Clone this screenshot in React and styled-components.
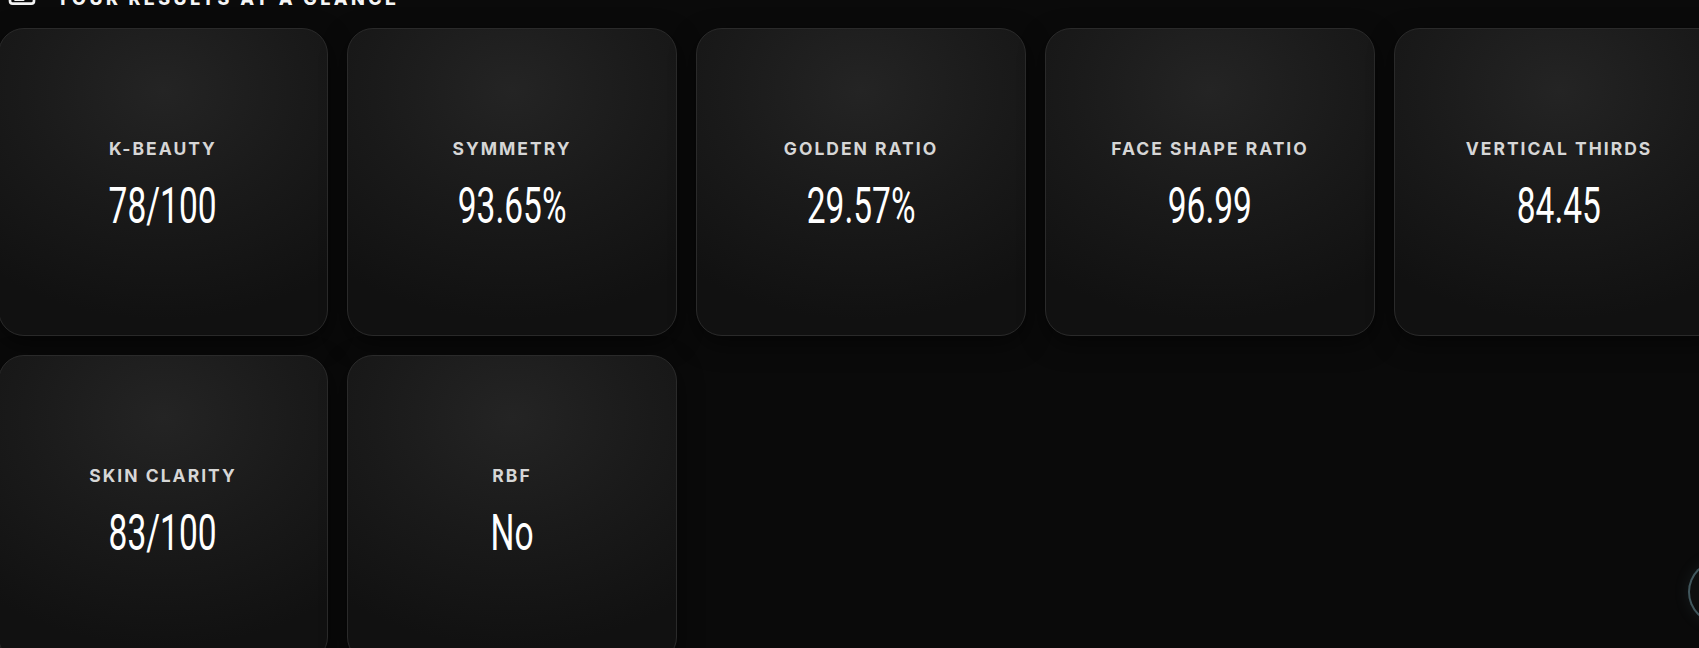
import React from "react";
import styled, { createGlobalStyle } from "styled-components";

const metrics = [
  { label: "K-BEAUTY", value: "78/100" },
  { label: "SYMMETRY", value: "93.65%" },
  { label: "GOLDEN RATIO", value: "29.57%" },
  { label: "FACE SHAPE RATIO", value: "96.99" },
  { label: "VERTICAL THIRDS", value: "84.45" },
  { label: "SKIN CLARITY", value: "83/100" },
  { label: "RBF", value: "No" },
];

const App = () => {
  return (
    <>
      <GlobalStyle />
      <Page>
        <Header>
          <HeaderIcon viewBox="0 0 24 24">
            <rect x="3" y="4" width="18" height="16" rx="2" />
            <path d="M7 9h10M7 13h10M7 17h6" />
          </HeaderIcon>
          <Title>YOUR RESULTS AT A GLANCE</Title>
        </Header>
        <Grid>
          {metrics.map((m) => (
            <Card key={m.label}>
              <Label>{m.label}</Label>
              <Value>
                <span>{m.value}</span>
              </Value>
            </Card>
          ))}
        </Grid>
      </Page>
      <FloatButton />
    </>
  );
};

export default App;

const GlobalStyle = createGlobalStyle`
  html, body {
    margin: 0;
    padding: 0;
    background: #0a0a0a;
    overflow: hidden;
    height: 100%;
  }
  body {
    font-family: "Inter", "Noto Sans", sans-serif;
    color: #fff;
  }
`;

const Page = styled.div`
  margin-top: -13px;
  margin-left: -2px;
  width: 1760px;
`;

const Header = styled.div`
  display: flex;
  align-items: center;
  gap: 18px;
  height: 24px;
  padding-left: 8px;
  margin-bottom: 17px;
`;

const HeaderIcon = styled.svg`
  width: 32px;
  height: 32px;
  fill: none;
  stroke: #f2f2f2;
  stroke-width: 2;
  stroke-linecap: round;
  stroke-linejoin: round;
  margin-top: -12px;
`;

const Title = styled.div`
  font-family: "Inter", sans-serif;
  font-weight: 800;
  font-size: 18px;
  line-height: 24px;
  letter-spacing: 3.4px;
  color: #f5f5f5;
`;

const Grid = styled.div`
  display: grid;
  grid-template-columns: repeat(5, 330px);
  grid-auto-rows: 308px;
  gap: 19px;
`;

const Card = styled.div`
  display: flex;
  flex-direction: column;
  align-items: center;
  justify-content: center;
  padding-top: 5px;
  border-radius: 26px;
  border: 1px solid #2a2a2a;
  box-sizing: border-box;
  background: radial-gradient(
    ellipse 85% 75% at 50% 20%,
    #242424 0%,
    #1a1a1a 50%,
    #111111 100%
  );
  box-shadow: 0 8px 24px rgba(0, 0, 0, 0.5);
`;

const Label = styled.div`
  font-family: "Inter", sans-serif;
  font-weight: 700;
  font-size: 17.5px;
  line-height: 20px;
  letter-spacing: 2px;
  color: #d6d6d6;
  margin-bottom: 22px;
`;

const Value = styled.div`
  font-family: "Roboto", sans-serif;
  font-weight: 400;
  font-size: 50px;
  line-height: 50px;
  color: #ffffff;

  span {
    display: inline-block;
    transform: scaleX(0.67);
  }
`;

const FloatButton = styled.div`
  position: fixed;
  right: -53px;
  bottom: 24px;
  width: 64px;
  height: 64px;
  box-sizing: border-box;
  border-radius: 50%;
  border: 2px solid rgba(110, 150, 160, 0.55);
  background: #0e0e0e;
  box-shadow: 0 0 16px rgba(110, 150, 160, 0.12);
`;
